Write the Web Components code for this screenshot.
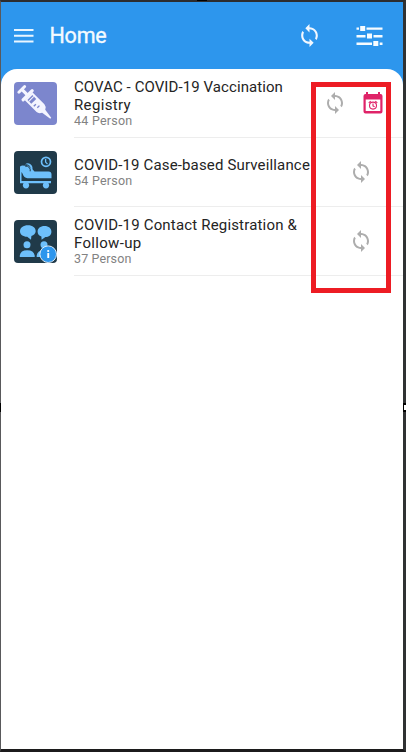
<!DOCTYPE html>
<html lang="en"><head><meta charset="utf-8"><title>Home</title>
<style>html,body{margin:0;width:406px;height:752px;overflow:hidden}body{font-family:Roboto,"Noto Sans",sans-serif}</style></head>
<body>
<home-screen></home-screen>
<script>
const define=(name,html,init)=>{
  const t=document.createElement('template');t.innerHTML=html;
  customElements.define(name,class extends HTMLElement{
    connectedCallback(){if(this.shadowRoot)return;this.attachShadow({mode:'open'}).append(t.content.cloneNode(true));if(init)init(this,this.shadowRoot);}
  });
};

// One line of text, tracked so that it fills the width given in its "fit" attribute.
define('fit-line','<style>:host{display:block;white-space:nowrap}span{display:inline-block}</style><span><slot></slot></span>',(el,r)=>{
  const s=r.querySelector('span'),n=el.textContent.length;
  s.style.letterSpacing=((+el.getAttribute('fit')-s.getBoundingClientRect().width)/n)+'px';
});

define('sync-icon',`<style>:host{display:block;width:24px;height:24px;color:#adadad}svg{display:block;width:100%;height:100%}</style>
<svg viewBox="0 0 24 24" fill="currentColor"><path d="M12 4V1L8 5l4 4V6c3.31 0 6 2.69 6 6 0 1.01-.25 1.97-.7 2.8l1.46 1.46C19.54 15.03 20 13.57 20 12c0-4.42-3.58-8-8-8zm0 14c-3.31 0-6-2.69-6-6 0-1.01.25-1.97.7-2.8L5.24 7.74C4.46 8.97 4 10.43 4 12c0 4.42 3.58 8 8 8v3l4-4-4-4v3z"/></svg>`);

define('event-icon',`<style>:host{display:block;width:20px;height:22px}svg{display:block}</style>
<svg width="20" height="22" viewBox="0 0 20 22"><path fill="#df2368" fill-rule="evenodd" d="M3 0h2v2h10V0h2v2h.5Q19.500 2 19.500 4v15.500q0 2-2 2h-15q-2 0-2-2V4q0-2 2-2H3zM2.700 7.500v11.500h14.600V7.500z"/>
<g fill="none" stroke="#df2368" stroke-width="1.100"><circle cx="10" cy="13.600" r="3.500"/><path d="M5.700 10.800l2-1.700M14.300 10.800l-2-1.700M10 11.500v2.400l1.600.9"/></g></svg>`);

define('syringe-icon',`<style>:host,svg{display:block;width:43px;height:43px}</style>
<svg viewBox="0 0 43 43"><rect width="43" height="43" rx="4" fill="#7c86cd"/>
<g transform="translate(6.700 6.300) rotate(45)" fill="#f4f5ff"><rect x="0" y="-5.500" width="3" height="11" rx="1.400"/><rect x="2" y="-1.600" width="8" height="3.200"/><rect x="8.200" y="-8" width="3.200" height="16" rx="1.500"/><path d="M11 -5.500H28q2.500 0 4.500 3.300L42.500-.7V.7L32.500 2.200Q30.500 5.500 28 5.500H11z"/>
<path fill="#7c86cd" d="M13-3.500h5.500v7H13z"/><path fill="#f4f5ff" d="M14.500-3.500h1v7h-1z"/><path stroke="#7c86cd" stroke-width="1.400" fill="none" d="M22 3.500v-3M25.500 2v-3"/></g></svg>`);

define('patient-icon',`<style>:host,svg{display:block;width:43px;height:43px}</style>
<svg viewBox="0 0 43 43"><rect width="43" height="43" rx="4" fill="#203a49"/>
<g fill="#6ec0fb"><path d="M8 14.500l4 .3q5 1.200 8.500 5.700H34.500q3 0 3 3v3.700H13.500Q10 27 8.500 22.500L7.500 21V30H37v2.200H6V15.500z"/><circle cx="12" cy="34.300" r="3.100"/><circle cx="32" cy="34.300" r="3.100"/><path d="M11 13.500q2.500-2.500 5.500-.2 3 2.500 1.600 6.200l-1.500-.7q.5-3-1.500-4.500-2-1.400-4.100-.8z"/><ellipse cx="13.800" cy="17" rx="2.100" ry="2.500" transform="rotate(-35 13.800 17)"/></g>
<g fill="none"><path stroke="#203a49" stroke-width="1" d="M11.200 15.200q2.300-.5 4 1.200 1.500 1.600 1 3.900"/><circle cx="32" cy="10.800" r="4.500" stroke="#6ec0fb" stroke-width="1.700"/><path d="M31.600 8v3.100l1.900 2" stroke="#6ec0fb" stroke-width="1.300"/></g></svg>`);

define('contact-icon',`<style>:host,svg{display:block;width:43px;height:43px}svg{overflow:visible}</style>
<svg viewBox="0 0 43 43"><rect width="43" height="43" rx="4" fill="#203a49"/>
<g fill="#6ec0fb"><path d="M14 5.200c4.600 0 7.700 2.400 7.700 6 0 2.300-2 4-4.300 4.900L17 19.700l-3.800-2.900C8.800 16.500 6 14.700 6 11.200c0-3.600 3.300-6 8-6zM30.500 6c4.200 0 6.900 2.300 6.900 5.700s-2.600 5.300-6 5.400l-3.800 2.700-.2-3.300c-2.400-.9-3.800-2.500-3.800-4.800 0-3.400 2.700-5.700 6.900-5.700z"/>
<circle cx="13" cy="24.800" r="3.500"/><circle cx="30" cy="24.800" r="3.500"/><path d="M5.800 37v-1.500q.7-5.200 7.400-5.200 6.500 0 7.500 5.200V37zM22.700 37v-1.500q.7-5.200 7.400-5.200 6.500 0 7.500 5.200V37z"/></g>
<circle cx="34.200" cy="34.200" r="8.300" fill="#2d96ed" stroke="#dcecf8" stroke-width="1"/><circle cx="34.200" cy="31" r="1.100" fill="#fff"/><path fill="#fff" d="M33.300 33h1.900v5h-1.900z"/></svg>`);

define('app-bar',`<style>:host{display:grid;grid-template-columns:20px 1fr auto;align-items:center;height:67px;box-sizing:border-box;padding:0 20px 0 12.500px;color:#f4faff}
.name{padding-left:16px;font-size:21.500px;line-height:28px;font-weight:400;-webkit-text-stroke:.35px currentColor}sync-icon{width:25px;height:25px;color:#f2f8ff}svg{display:block}.trail{display:flex;gap:34px}</style>
<svg width="20" height="16" viewBox="0 0 20 16" fill="#eaf6ff"><path d="M0 1h19.500v2.100H0zM0 6.700h19.500v2.100H0zM0 12.400h19.500v2.100H0z"/></svg>
<div class="name"><fit-line fit="57">Home</fit-line></div>
<div class="trail"><sync-icon></sync-icon><svg width="27" height="25" viewBox="0 0 27 25" fill="#f7fcff"><path d="M.5 4.400H3v2.400H.5zM4.200 3h5v5h-5zM10.500 4.400h16v2.400h-16zM.5 12h9v2.400h-9zM11 10.500h5v5h-5zM17.500 12h9v2.400h-9zM.5 19.600H16V22H.5zM17.300 18h5v5h-5zM23.700 19.600h2.800V22h-2.800z"/></svg></div>`);

define('program-row',`<style>:host{display:grid;grid-template-columns:73px 1fr auto;height:69px;align-items:center}
.icon{padding-left:13.300px}.body{height:100%;box-sizing:border-box;display:flex;flex-direction:column;justify-content:center;padding-top:1px;border-bottom:1px solid #ededed;min-width:0;color:#242424;font-size:15px;line-height:17.500px}
.count{margin-top:-1px;font-size:12.500px;line-height:15px;color:#828282}.actions{height:100%;box-sizing:border-box;border-bottom:1px solid #ededed;display:flex;align-items:center;justify-content:flex-end;gap:16px;padding-right:var(--end,30px)}</style>
<div class="icon"><slot name="icon"></slot></div><div class="body"><slot></slot><div class="count"><slot name="count"></slot></div></div><div class="actions"><slot name="action"></slot></div>`);

// Selection frame drawn over the status column.
define('highlight-frame','<style>:host{position:absolute;left:311px;top:82px;width:80px;height:211px;box-sizing:border-box;border:5px solid #ed1c24}</style>');
define('resize-handle','<style>:host{position:absolute;background:#000}:host([side=top]){left:197px;top:0;width:10px;height:1px}:host([side=left]){left:0;top:403px;width:1px;height:9px}:host([side=right]){left:403px;top:403px;width:3px;height:9px;box-sizing:border-box;background:#fff;border:solid #000;border-width:2px 0 2px 1px}</style>');

define('home-screen',`<style>:host{display:block;position:relative;width:406px;height:752px;box-sizing:border-box;border-style:solid;border-width:2px 3px 3px 1px;border-color:#2c2c2e #303233 #1c1b1c #59595b;background:#2d96ed;background-clip:padding-box}
main{height:680px;background:#fff;border-radius:16px 16px 0 0}highlight-frame,resize-handle{margin:-2px 0 0 -1px}</style>
<app-bar></app-bar><main>
<program-row style="--end:20px"><syringe-icon slot="icon"></syringe-icon><fit-line fit="209">COVAC - COVID-19 Vaccination</fit-line><fit-line fit="57">Registry</fit-line><fit-line slot="count" fit="58.500">44 Person</fit-line><sync-icon slot="action"></sync-icon><event-icon slot="action"></event-icon></program-row>
<program-row><patient-icon slot="icon"></patient-icon><fit-line fit="236">COVID-19 Case-based Surveillance</fit-line><fit-line slot="count" fit="58.500">54 Person</fit-line><sync-icon slot="action"></sync-icon></program-row>
<program-row><contact-icon slot="icon"></contact-icon><fit-line fit="223">COVID-19 Contact Registration &amp;</fit-line><fit-line fit="67.500">Follow-up</fit-line><fit-line slot="count" fit="57.500">37 Person</fit-line><sync-icon slot="action"></sync-icon></program-row>
</main><highlight-frame></highlight-frame><resize-handle side="top"></resize-handle><resize-handle side="left"></resize-handle><resize-handle side="right"></resize-handle>`);
</script></body></html>
